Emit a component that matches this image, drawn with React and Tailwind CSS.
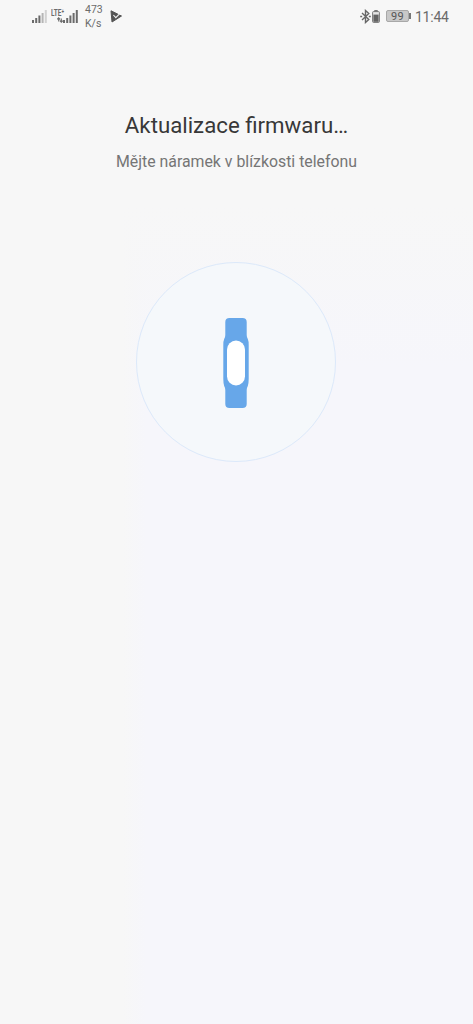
import React from "react";

const SignalBars = ({ faded = false }) => (
  <svg width="15" height="13" viewBox="0 0 15 13" fill="#6b6b6b">
    <rect x="0" y="10" width="2" height="3" />
    <rect x="3.2" y="8" width="2" height="5" />
    <rect x="6.4" y="5.5" width="2" height="7.5" />
    <rect x="9.6" y="3" width="2" height="10" fill={faded ? "#b5b5b5" : undefined} />
    <rect x="12.8" y="0" width="2" height="13" fill={faded ? "#d2d2d2" : undefined} />
  </svg>
);

const DataArrows = () => (
  <svg width="6" height="6" viewBox="0 0 6 6" fill="none" stroke="#6b6b6b" strokeWidth="1.1">
    <path d="M1.7 4.5V1M0.3 2.3 1.7 0.8 3 2.3M4.3 1.5V5M3 3.7 4.3 5.2 5.7 3.7" />
  </svg>
);

const PlayCheck = () => (
  <svg width="13" height="13" viewBox="0 0 13 13">
    <path d="M1 0.8 11.5 6 2 12Z" fill="#555" stroke="#555" strokeLinejoin="round" />
    <path d="M3.4 5 5.8 7.6 11 2.4" fill="none" stroke="#f7f7f7" strokeWidth="1.1" />
  </svg>
);

const BluetoothIcon = () => (
  <svg width="11" height="15" viewBox="0 0 11 15" fill="none" stroke="#666" strokeWidth="1.4">
    <path d="M2 4 8.8 10.5 5.5 13.5V1.5L8.8 4.5 2 11" />
    <path d="M0.2 7.5H2.2M8.8 7.5H10.8" />
  </svg>
);

const DeviceBattery = () => (
  <svg width="8" height="13" viewBox="0 0 8 13">
    <rect x="2.3" y="0" width="3.4" height="2" fill="#777" />
    <rect x="0.6" y="1.6" width="6.8" height="10.8" rx="0.8" fill="#e4e4e4" stroke="#777" />
    <rect x="1.4" y="4.6" width="5.2" height="7.2" fill="#626262" />
  </svg>
);

const StatusBar = () => (
  <div className="flex h-8 w-full justify-between pl-8 pr-[25px] text-[#6b6b6b]">
    <div className="flex">
      <div className="pt-[10px]">
        <SignalBars faded />
      </div>
      <div className="ml-1 flex w-3 flex-col items-end pt-[9px]">
        <span className="h-2 w-3 text-[9.5px] leading-[8px] font-bold whitespace-nowrap">
          <span className="block origin-left scale-x-[0.68]">LTE⁺</span>
        </span>
        <DataArrows />
      </div>
      <div className="pt-[10px]">
        <SignalBars />
      </div>
      <div className="ml-[7px] w-[18px] pt-[3px] text-[10.5px] leading-[14px]">
        <p>473</p>
        <p>K/s</p>
      </div>
      <div className="ml-[7px] pt-[10px]">
        <PlayCheck />
      </div>
    </div>

    <div className="flex">
      <div className="pt-[9px]">
        <BluetoothIcon />
      </div>
      <div className="ml-px pt-[10px]">
        <DeviceBattery />
      </div>
      <div className="ml-[6px] flex items-start pt-[10px]">
        <span className="flex h-3 w-[23px] items-center justify-center rounded-[2px] border border-[#a8a8a8] bg-[#c8c8c8] text-[11px] leading-none tracking-[0.3px] text-[#555]">
          99
        </span>
        <span className="mt-[3px] h-[6px] w-[2px] bg-[#777]" />
      </div>
      <span className="ml-1 w-[33px] pt-[7px] text-[14px] leading-5 tracking-[-0.25px] whitespace-nowrap">11:44</span>
    </div>
  </div>
);

const Band = () => (
  <svg className="mt-px" width="26" height="90" viewBox="0 0 26 90">
    <path
      d="M6.5 0H19.5Q23.7 0 23.7 4V17Q23.7 19 24.8 21Q25.7 23 25.7 27V61Q25.7 65 24.8 68Q23.7 70 23.7 72V86Q23.7 90 19.5 90H6.5Q2.3 90 2.3 86V72Q2.3 70 1.2 68Q0.3 65 0.3 61V27Q0.3 23 1.2 21Q2.3 19 2.3 17V4Q2.3 0 6.5 0Z"
      fill="#67a7e9"
    />
    <rect x="4" y="22.5" width="18" height="45" rx="9" fill="white" />
  </svg>
);

const App = () => {
  return (
    <div className="flex min-h-screen flex-col items-center bg-[linear-gradient(to_bottom,#f7f7f7_20%,transparent_36%),linear-gradient(to_right,#f7f7f7_26%,#f6f6fb_31%)] font-['Roboto',sans-serif]">
      <StatusBar />

      <div className="mt-[77px] flex flex-col items-center">
        <h1 className="text-[22.25px] leading-8 whitespace-nowrap text-[#383838]">Aktualizace firmwaru…</h1>
        <p className="mt-[9px] text-[15.85px] leading-6 whitespace-nowrap text-[#757575]">
          Mějte náramek v blízkosti telefonu
        </p>
      </div>

      <div className="mt-[88px] mr-px flex size-[200px] items-center justify-center rounded-full border border-[#dce9fa] bg-[#f5f8fb]">
        <Band />
      </div>
    </div>
  );
};

export default App;
